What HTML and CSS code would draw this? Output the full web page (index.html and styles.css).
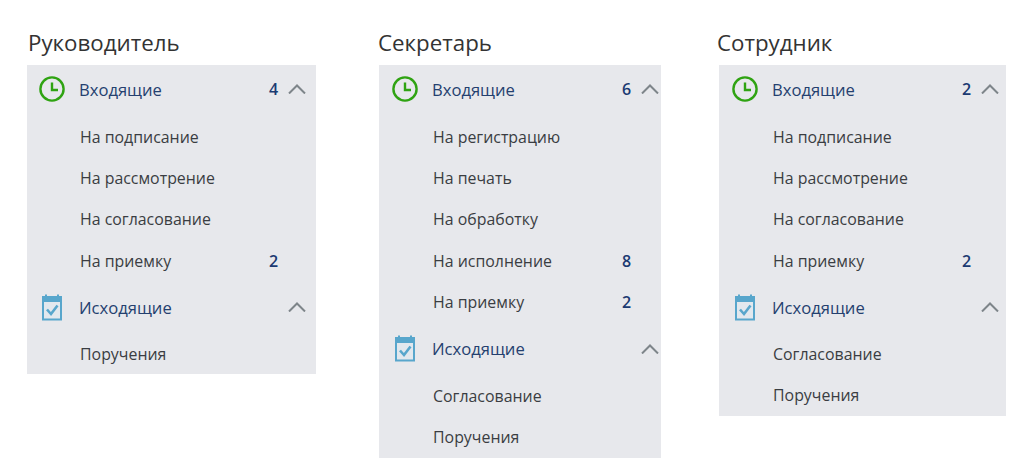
FILE: index.html
```html
<!DOCTYPE html>
<html lang="ru">
<head>
<meta charset="utf-8">
<title>Меню</title>
<link rel="stylesheet" href="styles.css">
</head>
<body>
<svg class="defs" width="0" height="0" aria-hidden="true">
  <symbol id="clock" viewBox="0 0 26 26">
    <circle cx="13" cy="13" r="11.6" fill="none" stroke="#2fa312" stroke-width="2.4"/>
    <path d="M13 6.5V14H19" fill="none" stroke="#2fa312" stroke-width="2.4"/>
  </symbol>
  <symbol id="cal" viewBox="0 0 22 27">
    <path d="M1 2H4V0.5H6V2H16V0.5H18V2H21V26.5H1Z" fill="#58a6cc"/>
    <rect x="3" y="8" width="16" height="16.5" fill="#e2e8ee"/>
    <path d="M6 15.5L10 20L16.5 11.5" fill="none" stroke="#58a6cc" stroke-width="2.6"/>
  </symbol>
  <symbol id="chev" viewBox="0 0 18 10">
    <path d="M1 9.5L9 1.5L17 9.5" fill="none" stroke="#7e858a" stroke-width="2"/>
  </symbol>
</svg>
<main class="columns">
  <section class="col col-a">
    <h2 class="title">Руководитель</h2>
    <div class="panel">
      <div class="head"><svg class="ico"><use href="#clock"/></svg><span class="label">Входящие</span><span class="num">4</span><svg class="chev"><use href="#chev"/></svg></div>
      <ul class="sub">
        <li class="item"><span class="label">На подписание</span></li>
        <li class="item"><span class="label">На рассмотрение</span></li>
        <li class="item"><span class="label">На согласование</span></li>
        <li class="item"><span class="label">На приемку</span><span class="num">2</span></li>
      </ul>
      <div class="head"><svg class="ico cal"><use href="#cal"/></svg><span class="label">Исходящие</span><span class="num"></span><svg class="chev"><use href="#chev"/></svg></div>
      <ul class="sub">
        <li class="item"><span class="label">Поручения</span></li>
      </ul>
    </div>
  </section>
  <section class="col col-b">
    <h2 class="title">Секретарь</h2>
    <div class="panel">
      <div class="head"><svg class="ico"><use href="#clock"/></svg><span class="label">Входящие</span><span class="num">6</span><svg class="chev"><use href="#chev"/></svg></div>
      <ul class="sub">
        <li class="item"><span class="label">На регистрацию</span></li>
        <li class="item"><span class="label">На печать</span></li>
        <li class="item"><span class="label">На обработку</span></li>
        <li class="item"><span class="label">На исполнение</span><span class="num">8</span></li>
        <li class="item"><span class="label">На приемку</span><span class="num">2</span></li>
      </ul>
      <div class="head"><svg class="ico cal"><use href="#cal"/></svg><span class="label">Исходящие</span><span class="num"></span><svg class="chev"><use href="#chev"/></svg></div>
      <ul class="sub">
        <li class="item"><span class="label">Согласование</span></li>
        <li class="item"><span class="label">Поручения</span></li>
      </ul>
    </div>
  </section>
  <section class="col col-c">
    <h2 class="title">Сотрудник</h2>
    <div class="panel">
      <div class="head"><svg class="ico"><use href="#clock"/></svg><span class="label">Входящие</span><span class="num">2</span><svg class="chev"><use href="#chev"/></svg></div>
      <ul class="sub">
        <li class="item"><span class="label">На подписание</span></li>
        <li class="item"><span class="label">На рассмотрение</span></li>
        <li class="item"><span class="label">На согласование</span></li>
        <li class="item"><span class="label">На приемку</span><span class="num">2</span></li>
      </ul>
      <div class="head"><svg class="ico cal"><use href="#cal"/></svg><span class="label">Исходящие</span><span class="num"></span><svg class="chev"><use href="#chev"/></svg></div>
      <ul class="sub">
        <li class="item"><span class="label">Согласование</span></li>
        <li class="item"><span class="label">Поручения</span></li>
      </ul>
    </div>
  </section>
</main>
</body>
</html>
```
FILE: styles.css
```css
* { box-sizing: border-box; }
html, body { margin: 0; height: 100%; overflow: hidden; background: #fff; }
body { font-family: "Open Sans", "Noto Sans", sans-serif; }
.defs { position: absolute; }
.columns { display: flex; align-items: flex-start; padding: 28px 0 0 27px; }
.col-a { width: 289px; margin-right: 63px; }
.col-b { width: 282px; margin-right: 57px; }
.col-c { width: 287px; margin-left: 1px; }
.title { margin: 0 0 0 1px; height: 37px; font-size: 22.3px; line-height: 30px; font-weight: 400; color: #333; }
.col-b .title { margin-left: -1px; }
.col-c .title { margin-left: -2px; }
.panel { background: #e7e8ec; }
.col-a .panel { padding-left: 12px; }
.col-b .panel { padding-left: 13px; }
.col-c .panel { padding-left: 13px; }
.head, .item { display: flex; align-items: center; width: 267px; }
.head { height: 48px; font-size: 16.6px; color: #24406f; }
.ico { width: 26px; height: 26px; margin-right: 14px; flex: none; }
.ico.cal { width: 22px; height: 27px; margin: 0 16px 0 2px; }
.label { flex: 1; }
.num { width: 11px; margin-right: 9px; font-weight: 600; font-size: 16px; color: #1b3a72; text-align: center; }
.chev { width: 18px; height: 10px; flex: none; }
.sub { list-style: none; margin: 0; padding: 3px 0 1.8px; }
.sub:last-child { padding: 1.6px 0 0; }
.col-b .sub:last-child { padding-top: 2.4px; }
.item { height: 41.4px; font-size: 15.9px; color: #3a3d42; padding-left: 40px; padding-right: 18px; }
.item .label { margin-left: 1px; }
```
